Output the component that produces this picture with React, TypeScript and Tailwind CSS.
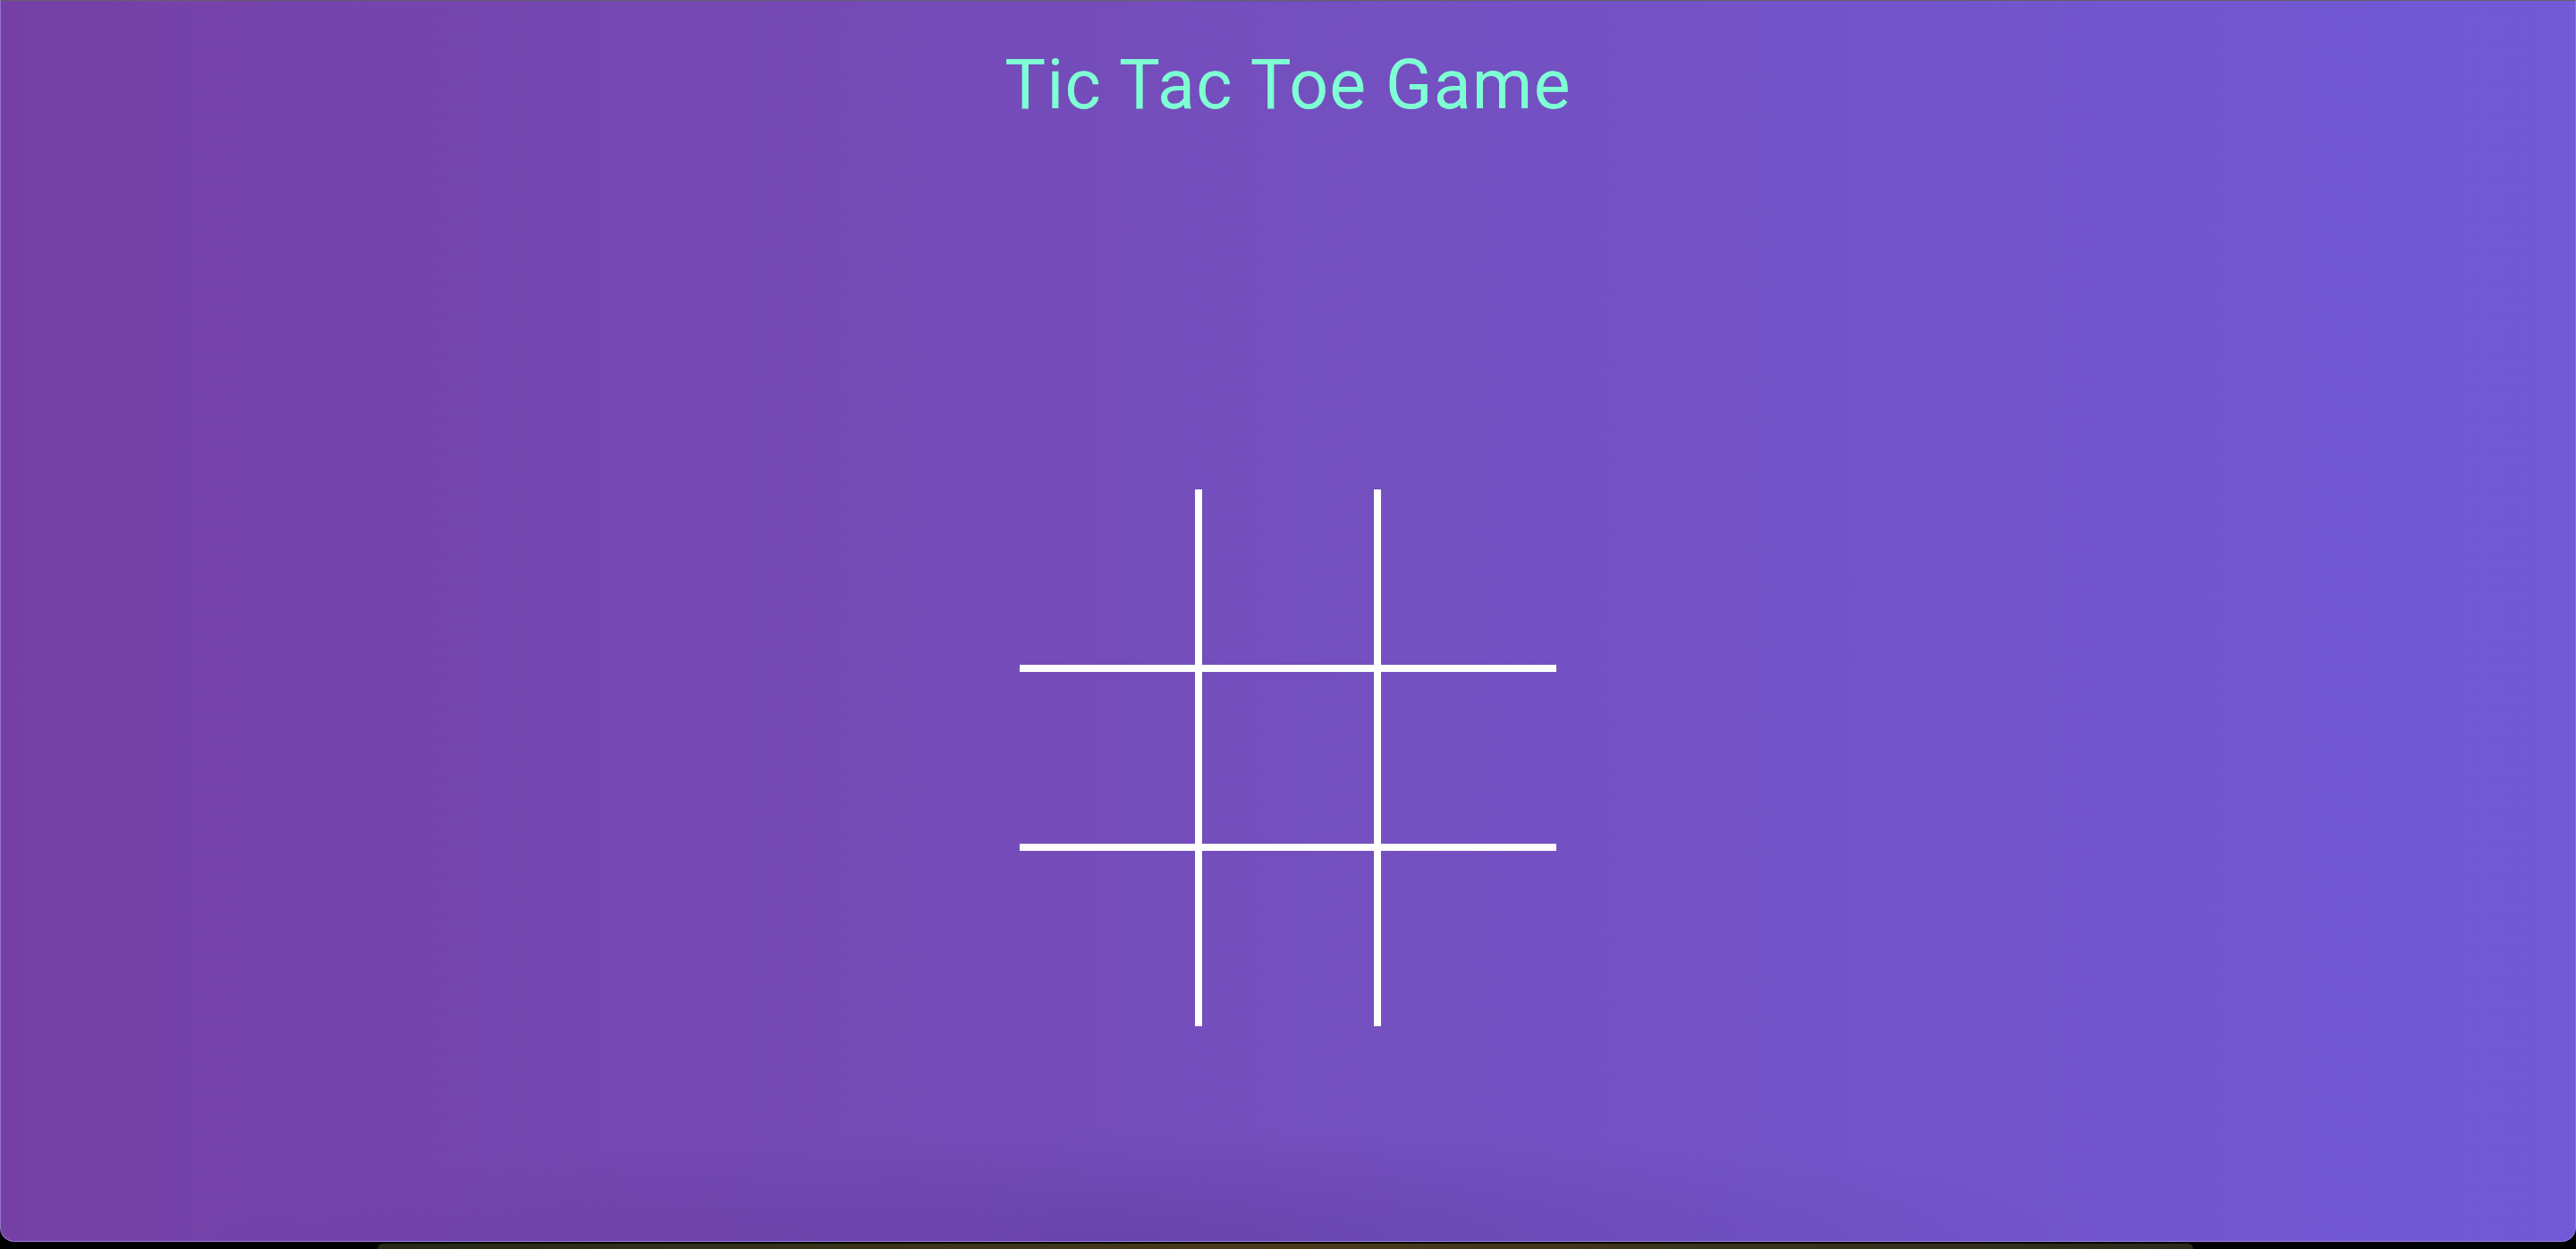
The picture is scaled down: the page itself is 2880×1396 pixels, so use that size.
export default function App() {
  const cells = Array.from({ length: 9 }, (_, i) => i)

  const cellBorder = (i: number) => {
    const row = Math.floor(i / 3)
    const col = i % 3
    const cls: string[] = []
    if (col < 2) cls.push("border-r-4")
    if (col > 0) cls.push("border-l-4")
    if (row < 2) cls.push("border-b-4")
    if (row > 0) cls.push("border-t-4")
    return cls.join(" ")
  }

  return (
    <div className="h-[1396px] w-full bg-black flex flex-col overflow-hidden">
      {/* Game window */}
      <div className="relative h-[1388px] w-full rounded-b-[16px] border-t border-t-[#626262] border-x border-b border-x-[#9575c9] border-b-[#9a80da] bg-gradient-to-r from-[#7540a6] via-[#744fbe] to-[#7159d7] flex flex-col items-center overflow-hidden">
        <div className="pointer-events-none absolute inset-0 bg-[radial-gradient(ellipse_38%_9%_at_45%_100%,rgba(60,30,110,0.2),transparent)]" />

        <h1
          className="relative mt-[49px] text-[77px] leading-[90px] font-normal tracking-[1.3px] text-[#7fffd4]"
          style={{ fontFamily: "Roboto, 'Noto Sans', sans-serif" }}
        >
          Tic Tac Toe Game
        </h1>

        {/* Board */}
        <div className="relative mt-[407px] grid grid-cols-3 w-[600px]">
          {cells.map((i) => (
            <div key={i} className={`h-[200px] border-white ${cellBorder(i)}`} />
          ))}
        </div>
      </div>

      {/* Strip of whatever sits below the window */}
      <div className="mt-[2px] ml-[422px] w-[2030px] h-[6px] rounded-t-[6px] bg-gradient-to-r from-[#262818] via-[#4a3a1a] to-[#2a2a1c]" />
    </div>
  )
}
